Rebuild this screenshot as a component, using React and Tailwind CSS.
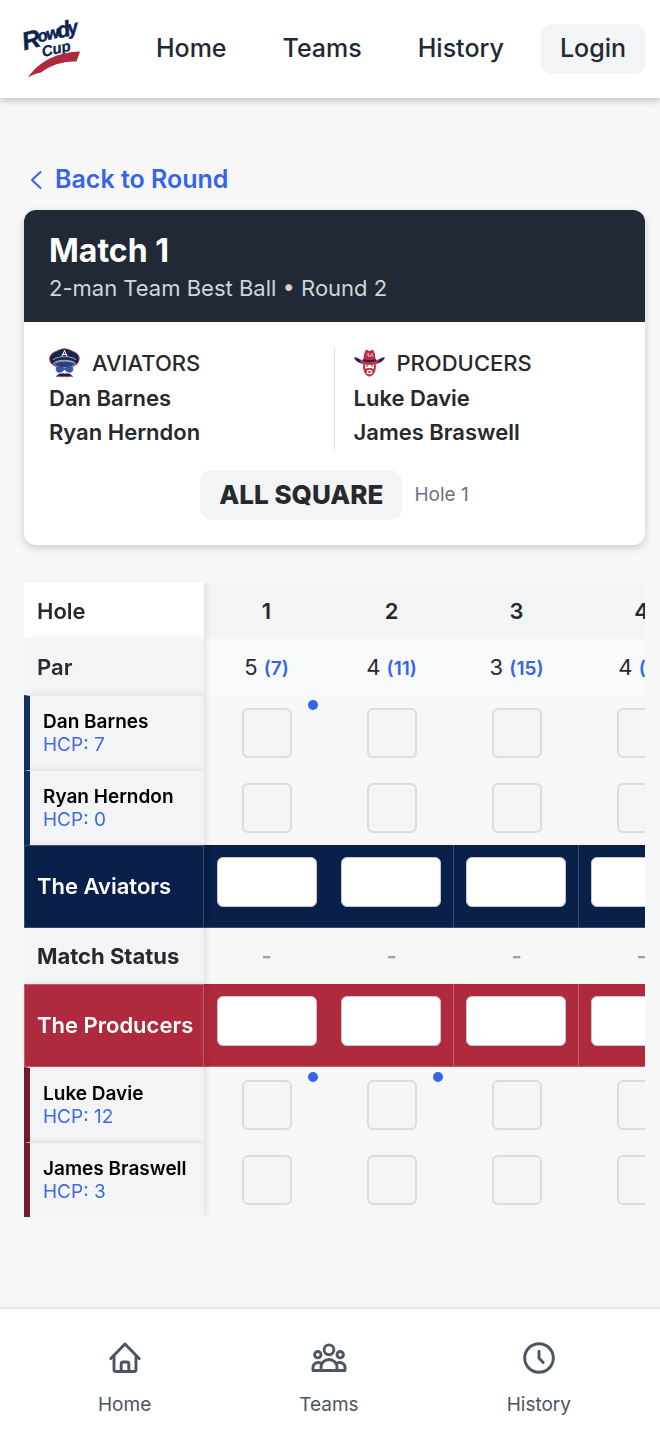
import React from "react";

const holes = [
  { number: 1, par: 5, index: 7 },
  { number: 2, par: 4, index: 11 },
  { number: 3, par: 3, index: 15 },
  { number: 4, par: 4, index: 5 },
];

const aviators = [
  { name: "Dan Barnes", handicap: 7, strokes: [1] },
  { name: "Ryan Herndon", handicap: 0, strokes: [] },
];

const producers = [
  { name: "Luke Davie", handicap: 12, strokes: [1, 2] },
  { name: "James Braswell", handicap: 3, strokes: [] },
];

function RowdyCupLogo() {
  return (
    <svg viewBox="0 0 56 60" className="h-[60px] w-14 overflow-visible" role="img" aria-label="Rowdy Cup">
      <g
        fill="#0b2450"
        stroke="#0b2450"
        strokeWidth="0.5"
        fontFamily="'Liberation Sans', sans-serif"
        fontWeight="700"
        fontStyle="italic"
      >
        <text transform="rotate(-14 1 30)">
          <tspan x="0" y="31" fontSize="25">R</tspan>
          <tspan x="16" y="27" fontSize="17">o</tspan>
          <tspan x="25" y="27" fontSize="17">w</tspan>
          <tspan x="36" y="28" fontSize="22">d</tspan>
          <tspan x="47" y="27" fontSize="19">y</tspan>
        </text>
        <text x="19" y="38" fontSize="15" strokeWidth="0.3" transform="rotate(-13 19 38)">
          Cup
        </text>
      </g>
      <path d="M4 58.500C15 42 34 33 56 32.500L52.500 42.500C39 42 27 46 17 53.500C13 54 8 56 4 58.500Z" fill="#b02a3e" />
    </svg>
  );
}

function AviatorsLogo() {
  return (
    <svg viewBox="0 0 92 88" className="h-[30px] w-[31px]" aria-hidden="true">
      <path
        d="M46 2C58 2 67 8 78 13C90 19 92 31 87 41C83 49 76 51 72 55L20 55C15 50 8 49 4 41C-1 30 3 19 14 13C25 8 34 2 46 2Z"
        fill="#17264f"
        stroke="#b8334a"
        strokeWidth="2.500"
      />
      <path d="M12 34C30 22 62 22 80 34M16 42C30 34 62 34 76 42" fill="none" stroke="#e8ecf5" strokeWidth="2" />
      <path d="M13 46C32 36 60 36 79 46C70 62 22 62 13 46Z" fill="#27407f" stroke="#d7deee" strokeWidth="2" />
      <path d="M38 24L46 8L54 24M41 19H51" fill="none" stroke="#ffffff" strokeWidth="3" />
      <path d="M22 57C30 54 40 56 46 60C52 56 62 54 70 57C73 69 66 73 58 71C52 70 49 66 46 63C43 66 40 70 34 71C26 73 19 69 22 57Z" fill="#3557b0" stroke="#22397a" strokeWidth="2" />
      <path d="M22 85C25 76 36 73 46 76C56 73 67 76 70 85C60 82 55 87 46 84C37 87 31 82 22 85Z" fill="#17264f" stroke="#c33b50" strokeWidth="2" />
    </svg>
  );
}

function ProducersLogo() {
  return (
    <svg viewBox="0 0 92 84" className="h-7 w-[31px]" aria-hidden="true">
      <path d="M27 46C25 66 33 80 46 83C59 80 67 66 65 46Z" fill="#b8303f" />
      <path d="M32 46H60L59 60C54 56 38 56 33 60Z" fill="#ffffff" />
      <path d="M37 66C41 61 51 61 55 66C56 74 51 76 46 76C41 76 36 74 37 66Z" fill="#ffffff" />
      <path d="M39 67H53L50 71H42Z" fill="#b8303f" />
      <path d="M0 26C7 23 13 29 21 32H71C79 29 85 23 92 26C86 39 67 48 46 48C25 48 6 39 0 26Z" fill="#c4374a" />
      <path d="M0 26C6 23 12 29 18 32L20 42C10 39 4 34 0 26ZM92 26C86 23 80 29 74 32L72 42C82 39 88 34 92 26Z" fill="#1a2a55" />
      <path d="M28 30C29 16 32 2 38 2C42 2 43 6 46 6C49 6 50 2 54 2C60 2 63 16 64 30C54 36 38 36 28 30Z" fill="#bd3043" />
      <path d="M27 29C38 34 54 34 65 29V37C54 41 38 41 27 37Z" fill="#1a2a55" />
      <path d="M38 16C42 11 45 13 42 18C39 22 45 24 48 18M49 24L54 12M54 17L57 23" fill="none" stroke="#ffffff" strokeWidth="2" />
      <path d="M35 51H42M50 51H57" stroke="#b8303f" strokeWidth="3" />
    </svg>
  );
}

const iconProps = {
  viewBox: "0 0 38 38",
  className: "size-[38px]",
  fill: "none",
  stroke: "currentColor",
  strokeWidth: 2.9,
  strokeLinecap: "round",
  strokeLinejoin: "round",
  "aria-hidden": true,
};

function HomeIcon() {
  return (
    <svg {...iconProps}>
      <path d="M4.800 19.600L19 5L33.200 19.600" />
      <path d="M8 17V30.500A2 2 0 0 0 10 32.500H28A2 2 0 0 0 30 30.500V17" />
      <path d="M15.200 32V25A2 2 0 0 1 17.200 23H20.800A2 2 0 0 1 22.800 25V32" />
    </svg>
  );
}

function TeamsIcon() {
  return (
    <svg {...iconProps}>
      <circle cx="19" cy="10.800" r="4.900" />
      <circle cx="7.800" cy="15.700" r="3.200" />
      <circle cx="30.200" cy="15.700" r="3.200" />
      <path d="M11 31.500V28.300A8 7.800 0 0 1 27 28.300V31.500" />
      <path d="M11.200 24.200C7 22.400 3 24.500 3 28.500V31.500H35V28.500C35 24.500 31 22.400 26.800 24.200" />
    </svg>
  );
}

function HistoryIcon() {
  return (
    <svg {...iconProps}>
      <circle cx="19" cy="19" r="14.300" />
      <path d="M19 12.500V19L23.200 23.400" />
    </svg>
  );
}

function Team({ name, logo, players, className }) {
  return (
    <div className={className}>
      <div className="mb-[2px] flex h-8 items-center gap-3">
        <span className="flex w-[31px] justify-start">{logo}</span>
        <h2 className="text-[22px] font-medium">{name}</h2>
      </div>
      {players.map((p) => (
        <p key={p.name} className="text-[22px] leading-[34px] font-semibold">
          {p.name}
        </p>
      ))}
    </div>
  );
}

const sticky = "sticky left-0 z-10 text-left shadow-[2px_0_6px_rgba(0,0,0,0.1)]";

function PlayerRow({ player, bar }) {
  return (
    <tr className="h-[75px]">
      <th scope="row" className={`${sticky} border-t border-l-[6px] border-t-[#e6e8ea] bg-[#f3f4f6] pl-[13px] font-normal ${bar}`}>
        <span className="block text-[19px] leading-[23px] font-semibold text-black">{player.name}</span>
        <span className="block text-[19px] leading-[23px] text-[#3f69e6]">HCP: {player.handicap}</span>
      </th>
      {holes.map((h) => (
        <td key={h.number} className="relative p-0">
          <input
            aria-label={`${player.name}, hole ${h.number}`}
            inputMode="numeric"
            className="mx-auto block size-[50px] rounded-md border-2 border-[#dadde0] bg-[#f5f5f5] text-center text-[22px]"
          />
          {player.strokes.includes(h.number) && (
            <span className="absolute top-[5px] right-[11px] size-[10px] rounded-full bg-[#3563e9]" />
          )}
        </td>
      ))}
    </tr>
  );
}

function TeamRow({ name, fill, line }) {
  return (
    <tr className={`h-[83px] ${fill}`}>
      <th scope="row" className={`${sticky} border pl-3 text-[22px] font-semibold whitespace-nowrap text-white ${fill} ${line}`}>
        {name}
      </th>
      {holes.map((h) => (
        <td key={h.number} className={`border-b p-0 pt-3 align-top ${h.number > 1 ? "border-r" : ""} ${line}`}>
          <input
            aria-label={`${name}, hole ${h.number}`}
            inputMode="numeric"
            className="mx-auto block h-[50px] w-[100px] rounded-md border border-[#c3c7ce] bg-white text-center text-[22px]"
          />
        </td>
      ))}
    </tr>
  );
}

export default function App() {
  return (
    <div className="flex min-h-screen flex-col bg-[#f7f7f7] font-['Inter',sans-serif] text-[#27292c]">
      <header className="flex h-[98px] items-center justify-between bg-white pr-[15px] pl-6 shadow-[0_2px_8px_rgba(0,0,0,0.25)]">
        <a href="#home">
          <RowdyCupLogo />
        </a>
        <nav className="flex items-center gap-[18px] text-[25px] font-medium text-[#212936]">
          <a href="#home" className="px-[19px]">Home</a>
          <a href="#teams" className="px-[19px]">Teams</a>
          <a href="#history" className="px-[19px]">History</a>
          <button type="button" className="h-[50px] rounded-[10px] bg-[#f3f4f6] px-[19px]">
            Login
          </button>
        </nav>
      </header>

      <main className="flex-1 pt-[63px] pr-[15px] pb-[90px] pl-6">
        <a href="#round" className="flex h-[38px] w-fit items-center gap-3 pl-[6px] text-[25px] font-semibold text-[#3563e9]">
          <svg viewBox="0 0 13 20" className="h-5 w-[13px]" fill="none" stroke="currentColor" strokeWidth="2" strokeLinecap="round" strokeLinejoin="round" aria-hidden="true">
            <path d="M10.500 2L2 10L10.500 18" />
          </svg>
          Back to Round
        </a>

        <section className="mt-[11px] overflow-hidden rounded-xl bg-white shadow-[0_3px_8px_rgba(0,0,0,0.18)]">
          <div className="h-28 bg-[#212936] px-[25px] pt-[22px]">
            <h1 className="text-[32px] leading-[38px] font-bold text-white">Match 1</h1>
            <p className="text-[22px] leading-9 text-[#d1d5db]">2-man Team Best Ball • Round 2</p>
          </div>
          <div className="p-[25px]">
            <div className="grid grid-cols-2 pr-[2px]">
              <Team name="AVIATORS" logo={<AviatorsLogo />} players={aviators} className="pb-[2px]" />
              <Team name="PRODUCERS" logo={<ProducersLogo />} players={producers} className="border-l border-[#dfe2e6] pb-[2px] pl-[19px]" />
            </div>
            <div className="mt-[19px] flex items-center justify-center gap-3">
              <span className="rounded-xl bg-[#f3f4f6] px-[19px] text-[26px] leading-[50px] font-extrabold">ALL SQUARE</span>
              <span className="text-[19px] text-[#6b7280]">Hole 1</span>
            </div>
          </div>
        </section>

        <div className="mt-[38px] overflow-x-auto [scrollbar-width:none]">
          <table className="w-[680px] table-fixed border-separate border-spacing-0">
            <colgroup>
              <col className="w-[180px]" />
              {holes.map((h) => (
                <col key={h.number} className="w-[125px]" />
              ))}
            </colgroup>
            <thead>
              <tr className="h-14 bg-[#f3f4f6] text-[22px]">
                <th scope="col" className={`${sticky} bg-white pl-[13px] font-semibold`}>Hole</th>
                {holes.map((h) => (
                  <th key={h.number} scope="col" className="font-semibold">{h.number}</th>
                ))}
              </tr>
            </thead>
            <tbody>
              <tr className="h-14 bg-[#f9fafc] text-[22px]">
                <th scope="row" className={`${sticky} bg-[#f3f4f6] pl-[13px] font-semibold`}>Par</th>
                {holes.map((h) => (
                  <td key={h.number} className="text-center">
                    {h.par} <span className="text-[19px] font-semibold text-[#3563e9]">({h.index})</span>
                  </td>
                ))}
              </tr>
              {aviators.map((p) => (
                <PlayerRow key={p.name} player={p} bar="border-l-[#12305f]" />
              ))}
              <TeamRow name="The Aviators" fill="bg-[#09204a]" line="border-[#3a4d70]" />
              <tr className="h-14">
                <th scope="row" className={`${sticky} bg-[#f3f4f6] pl-[13px] text-[22px] font-bold`}>Match Status</th>
                {holes.map((h) => (
                  <td key={h.number} className="text-center text-[22px] font-semibold text-[#9ca3af]">-</td>
                ))}
              </tr>
              <TeamRow name="The Producers" fill="bg-[#ae2a3c]" line="border-[#c25e6b]" />
              {producers.map((p) => (
                <PlayerRow key={p.name} player={p} bar="border-l-[#721b2a]" />
              ))}
            </tbody>
          </table>
        </div>
      </main>

      <nav className="flex h-[137px] items-start justify-around border-t-2 border-[#e5e7eb] bg-white pt-[30px] pr-[15px] pl-6 text-[19px] text-[#4b5563]">
        <a href="#home" className="flex flex-col items-center gap-[14px]">
          <HomeIcon />
          Home
        </a>
        <a href="#teams" className="flex flex-col items-center gap-[14px]">
          <TeamsIcon />
          Teams
        </a>
        <a href="#history" className="flex flex-col items-center gap-[14px]">
          <HistoryIcon />
          History
        </a>
      </nav>
    </div>
  );
}
